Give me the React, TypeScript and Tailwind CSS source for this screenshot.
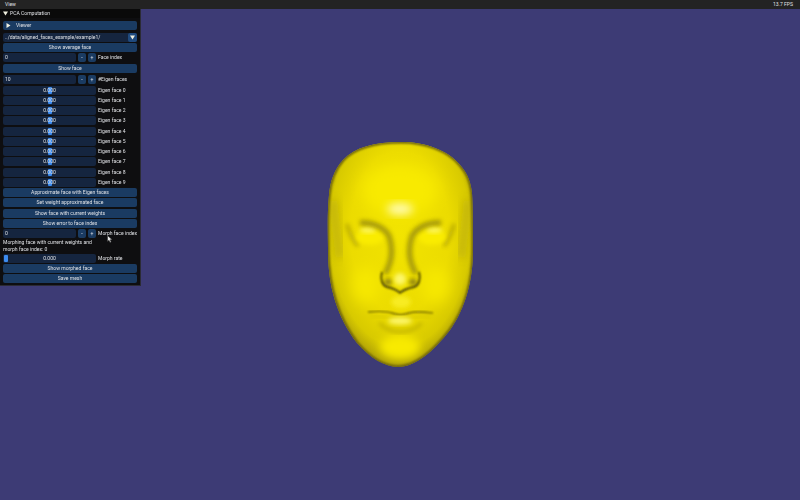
import React from 'react';

const Btn = ({ label }: { label: string }) => (
  <div className="flex h-[9px] items-center justify-center rounded-[2px] bg-[#1a3b62]">{label}</div>
);

const Stepper = ({ value, label }: { value: string; label: string }) => (
  <div className="flex h-[9px] items-center">
    <div className="flex h-full w-[73px] shrink-0 items-center rounded-[2px] bg-[#15253f] pl-[2px]">{value}</div>
    <div className="ml-[2px] flex h-full w-[8px] shrink-0 items-center justify-center rounded-[2px] bg-[#1a3b62]">-</div>
    <div className="ml-[2px] flex h-full w-[8px] shrink-0 items-center justify-center rounded-[2px] bg-[#1a3b62]">+</div>
    <span className="ml-[2px] whitespace-nowrap">{label}</span>
  </div>
);

const Slider = ({ label, morph }: { label: string; morph?: boolean }) => (
  <div className="flex h-[9px] items-center">
    <div className="relative flex h-full w-[93px] shrink-0 items-center justify-center rounded-[2px] bg-[#15253f]">
      {morph ? (
        <div className="absolute left-[1px] top-[1px] h-[7px] w-[4px] rounded-[1px] bg-[#3d8cf0]" />
      ) : (
        <div className="absolute left-[45px] top-[1px] h-[7px] w-[4px] rounded-[1px] bg-[#3d8cf0]" />
      )}
      <span className="relative">0.000</span>
    </div>
    <span className="ml-[2px] whitespace-nowrap">{label}</span>
  </div>
);

const outline =
  'M401 142C375 142 355 147 343 160C334 170 330 182 329 195C327 215 328 235 328 250C328 285 336 315 357 343C370 358 385 367 398 367C415 367 433 352 450 330C463 312 473 285 473 250C473 230 473 210 472 193C470 178 466 172 460 165C448 150 425 142 401 142Z';

const Face = () => (
  <svg width="160" height="240" viewBox="320 135 160 240">
    <defs>
      <radialGradient id="base" gradientUnits="userSpaceOnUse" cx="400" cy="232" r="125" gradientTransform="translate(400 232) scale(0.66 1.08) translate(-400 -232)">
        <stop offset="0" stop-color="#f2e400" />
        <stop offset="0.6" stop-color="#ecdc00" />
        <stop offset="0.85" stop-color="#d8ca00" />
        <stop offset="1" stop-color="#a89a08" />
      </radialGradient>
      <filter id="b1" x="-30%" y="-30%" width="160%" height="160%"><feGaussianBlur stdDeviation="1" /></filter>
      <filter id="b2" x="-30%" y="-30%" width="160%" height="160%"><feGaussianBlur stdDeviation="2" /></filter>
      <filter id="b4" x="-30%" y="-30%" width="160%" height="160%"><feGaussianBlur stdDeviation="4" /></filter>
      <filter id="b7" x="-40%" y="-40%" width="180%" height="180%"><feGaussianBlur stdDeviation="7" /></filter>
      <clipPath id="outline"><path d={outline} /></clipPath>
    </defs>
    <g clipPath="url(#outline)">
      <rect x="320" y="135" width="160" height="240" fill="url(#base)" />
      {/* soft light on forehead, cheeks, chin */}
      <ellipse cx="400" cy="190" rx="38" ry="26" fill="#f8ea00" filter="url(#b7)" />
      <ellipse cx="366" cy="285" rx="14" ry="18" fill="#f6e800" filter="url(#b7)" />
      <ellipse cx="436" cy="285" rx="14" ry="18" fill="#f6e800" filter="url(#b7)" />
      <ellipse cx="400" cy="347" rx="20" ry="12" fill="#f8ea00" filter="url(#b4)" />
      {/* temple creases */}
      <path d="M347 224C349 232 352 239 358 246" fill="none" stroke="#a89a08" strokeWidth="4" filter="url(#b2)" opacity="0.7" />
      <path d="M454 224C452 232 449 239 444 246" fill="none" stroke="#a89a08" strokeWidth="4" filter="url(#b2)" opacity="0.7" />
      <path d="M333 200C335 222 338 240 340 258" fill="none" stroke="#b8aa08" strokeWidth="9" filter="url(#b4)" opacity="0.7" />
      <path d="M468 200C466 222 463 240 461 258" fill="none" stroke="#b8aa08" strokeWidth="9" filter="url(#b4)" opacity="0.7" />
      {/* eye lobes */}
      <ellipse cx="370" cy="237" rx="14" ry="8" fill="#faec00" filter="url(#b2)" />
      <ellipse cx="432" cy="237" rx="14" ry="8" fill="#faec00" filter="url(#b2)" />
      <ellipse cx="368" cy="230" rx="8" ry="3" fill="#fdf55a" filter="url(#b2)" />
      <ellipse cx="434" cy="230" rx="8" ry="3" fill="#fdf55a" filter="url(#b2)" />
      {/* brow into nose side */}
      <path d="M360 223C372 222 384 227 389 236C393 248 392 262 385 274" fill="none" stroke="#938708" strokeWidth="5.5" filter="url(#b2)" opacity="0.8" />
      <path d="M441 223C430 222 418 226 412 236C408 248 409 262 416 274" fill="none" stroke="#938708" strokeWidth="5.5" filter="url(#b2)" opacity="0.8" />
      {/* nose */}
      <path d="M400 228L400 268" stroke="#f4e608" strokeWidth="7" filter="url(#b2)" />
      <ellipse cx="388" cy="282" rx="4" ry="3.5" fill="#8e820a" filter="url(#b2)" />
      <ellipse cx="413" cy="282" rx="4" ry="3.5" fill="#8e820a" filter="url(#b2)" />
      <path d="M382 272C380 279 382 285 387 287C392 288 396 289 400 293C404 289 409 288 414 287C419 285 421 279 419 272" fill="none" stroke="#4a4308" strokeWidth="1.8" filter="url(#b1)" />
      <ellipse cx="400" cy="279" rx="6" ry="6" fill="#fdf66a" filter="url(#b2)" />
      {/* mouth */}
      <ellipse cx="401" cy="302" rx="10" ry="6" fill="#f8ec20" filter="url(#b2)" />
      <path d="M368 312C378 311 386 311 392 313C397 315 404 315 409 313C416 311 424 312 433 313" fill="none" stroke="#6e640a" strokeWidth="1.4" filter="url(#b1)" />
      <path d="M370 316C382 316 392 318 400 318C410 318 420 316 432 316" fill="none" stroke="#d8ca06" strokeWidth="2.5" filter="url(#b2)" />
      <path d="M379 323C385 329 392 332 400 332C409 332 416 329 422 323" fill="none" stroke="#c0b208" strokeWidth="3" filter="url(#b2)" />
      <ellipse cx="400" cy="321" rx="12" ry="3.5" fill="#fdf66a" filter="url(#b2)" />
      {/* forehead glint */}
      <ellipse cx="400" cy="209" rx="13" ry="6" fill="#fffbb0" filter="url(#b4)" />
      {/* rim */}
      <path d={outline} fill="none" stroke="#6a610c" strokeWidth="3" filter="url(#b1)" />
    </g>
  </svg>
);

export default function App() {
  const eigen = [0, 1, 2, 3, 4, 5, 6, 7, 8, 9];
  return (
    <div className="flex h-screen flex-col bg-[#3d3b75] font-['Roboto',sans-serif] text-[5.05px] leading-[9px] text-[#e0e2e6]">
      {/* Menu bar */}
      <div className="flex h-[9px] items-center justify-between bg-[#232323] pl-[5px] pr-[7px]">
        <span>View</span>
        <span>13.7 FPS</span>
      </div>

      <div className="relative flex flex-1 items-center justify-center">
        <Face />

        {/* PCA window */}
        <div className="absolute left-0 top-0 h-[277px] w-[141px] border-r border-b border-[#2b2b35] bg-[#0e0e10] blur-[0.25px]">
          <div className="flex h-[9px] items-center bg-[#0a0a0a] pl-[3px]">
            <svg width="5" height="5" viewBox="0 0 5 5"><polygon points="0,0.5 5,0.5 2.5,4.5" fill="#f0f0e0" /></svg>
            <span className="ml-[2px]">PCA Computation</span>
          </div>
          <div className="flex flex-col gap-[1.25px] px-[3px]">
            <div className="mt-[3px] flex h-[9px] items-center rounded-[2px] bg-[#1a3b62] pl-[3px]">
              <svg width="5" height="5" viewBox="0 0 5 5"><polygon points="0.5,0 4.5,2.5 0.5,5" fill="#f0f0e0" /></svg>
              <span className="ml-[5px]">Viewer</span>
            </div>
            <div className="mt-[1.5px] flex h-[9px] items-center rounded-[2px] bg-[#15253f]">
              <span className="flex-1 pl-[2px]">../data/aligned_faces_example/example1/</span>
              <div className="flex h-full w-[9px] items-center justify-center rounded-[2px] bg-[#1f4a7e]">
                <svg width="5" height="5" viewBox="0 0 5 5"><polygon points="0,0.5 5,0.5 2.5,4.5" fill="#f0f0e0" /></svg>
              </div>
            </div>
            <Btn label="Show average face" />
            <Stepper value="0" label="Face index" />
            <Btn label="Show face" />
            <div className="mt-[1.5px]"><Stepper value="10" label="#Eigen faces" /></div>
            {eigen.map((i) => (
              <Slider key={i} label={`Eigen face ${i}`} />
            ))}
            <Btn label="Approximate face with Eigen faces" />
            <Btn label="Set weight approximated face" />
            <Btn label="Show face with current weights" />
            <Btn label="Show error to face index" />
            <Stepper value="0" label="Morph face index" />
            <p className="leading-[6.5px]">
              Morphing face with current weights and
              <br />
              morph face index: 0
            </p>
            <Slider label="Morph rate" morph />
            <Btn label="Show morphed face" />
            <Btn label="Save mesh" />
          </div>
        </div>

        {/* Mouse cursor */}
        <svg className="absolute left-[107px] top-[226px]" width="6" height="8" viewBox="0 0 6 8">
          <path d="M0.5 0.5V6.5L2 5.2L3 7.5L4.2 7L3.2 4.8H5.2Z" fill="#e8e8e8" stroke="#222" strokeWidth="0.5" />
        </svg>
      </div>
    </div>
  );
}
